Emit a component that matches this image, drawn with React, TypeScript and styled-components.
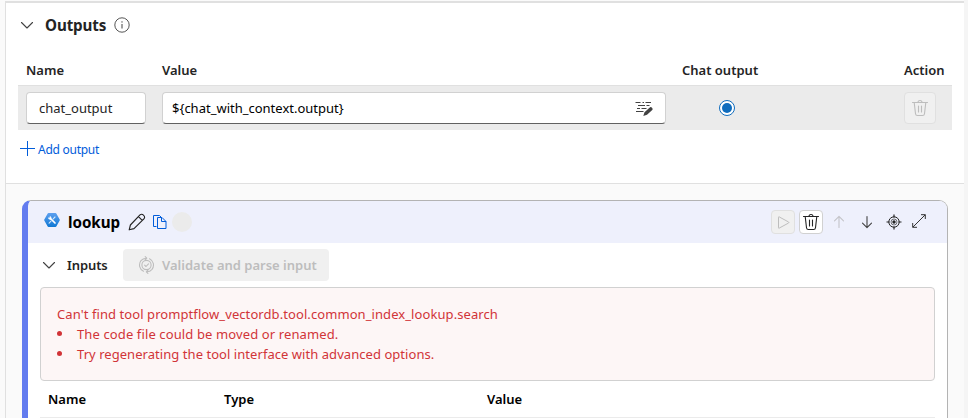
import React from "react";
import styled, { createGlobalStyle } from "styled-components";

const GlobalStyle = createGlobalStyle`
  * { box-sizing: border-box; }
  body {
    margin: 0;
    background: #fafafa;
    color: #242424;
    font-family: "Noto Sans", "Open Sans", sans-serif;
    font-size: 13px;
    line-height: 20px;
    overflow: hidden;
  }
  svg { display: block; flex: none; }
`;

const Page = styled.div`
  width: 968px;
  height: 418px;
  padding: 1px 4px 0 5px;
  overflow: hidden;
  background: linear-gradient(to right, #fafafa 964px, #f5f5f5 964px);
`;

const Panel = styled.main`
  height: 417px;
  border-left: 1px solid #e0e0e0;
  border-top: 2px solid #e0e0e0;
`;

const Label = styled.span<{ $weight?: number; $spacing?: number; $color?: string }>`
  font-weight: ${(p) => p.$weight ?? 400};
  letter-spacing: ${(p) => p.$spacing ?? 0}px;
  color: ${(p) => p.$color ?? "inherit"};
  white-space: nowrap;
`;

const OutputsSection = styled.section`
  height: 181px;
  padding: 10px 12px 0;
  background: #fff;
  border-bottom: 1px solid #e0e0e0;
`;

const SectionTitle = styled.div`
  display: flex;
  align-items: center;
  height: 24px;
  padding-left: 2px;
`;

const TitleText = styled.h2`
  margin: 0 8px 0 11px;
  font-size: 15.2px;
  font-weight: 700;
  line-height: 22px;
  letter-spacing: -0.12px;
`;

const OutputGrid = styled.div`
  display: grid;
  grid-template-columns: 120px 504px 1fr 48px;
  column-gap: 16px;
  align-items: center;
  width: 934px;
  padding: 0 0 0 8px;
`;

const OutputHead = styled(OutputGrid)`
  height: 30px;
  margin-top: 18px;
`;

const OutputRow = styled(OutputGrid)`
  height: 45px;
  background: #ebebeb;
  border-top: 1px solid #e0e0e0;
`;

const Field = styled.div`
  display: flex;
  align-items: center;
  justify-content: space-between;
  height: 32px;
  padding: 0 12px 0 9px;
  background: #fff;
  border: 1px solid #d1d1d1;
  border-bottom-color: #616161;
  border-radius: 4px;
`;

const NameField = styled(Field)`
  padding-left: 12px;
`;

const RadioCell = styled.div`
  padding-left: 37px;
`;

const IconButton = styled.div<{ $size: number; $disabled?: boolean }>`
  display: flex;
  align-items: center;
  justify-content: center;
  flex: none;
  width: ${(p) => p.$size}px;
  height: ${(p) => p.$size}px;
  color: ${(p) => (p.$disabled ? "#bdbdbd" : "#242424")};
  background: ${(p) => (p.$disabled ? "#f0f0f0" : "#fff")};
  border: 1px solid ${(p) => (p.$disabled ? "#e0e0e0" : "#d1d1d1")};
  border-radius: 4px;
`;

const AddLink = styled.div`
  display: flex;
  align-items: center;
  gap: 3px;
  height: 20px;
  margin: 9px 0 0 2px;
  color: #015cda;
`;

const AddText = styled.span`
  padding-top: 1px;
  font-size: 12px;
  letter-spacing: -0.26px;
`;

const NodeCard = styled.section`
  width: 926px;
  height: 240px;
  margin: 16px 0 0 16px;
  background: #fff;
  border: 1px solid #b3b3b3;
  border-left: 6px solid #637cef;
  border-radius: 9px;
  overflow: hidden;
`;

const NodeHeader = styled.header`
  display: flex;
  align-items: center;
  height: 42px;
  padding: 0 21px 0 16px;
  background: #eef0fc;
`;

const LogoSlot = styled.div`
  padding-bottom: 4px;
`;

const NodeName = styled.h3`
  margin: 0 8px 0 8px;
  font-size: 15.2px;
  line-height: 22px;
  letter-spacing: -0.06px;
  color: #000;
`;

const EditIcons = styled.div`
  display: flex;
  align-items: center;
  gap: 7px;
`;

const StatusDot = styled.i`
  width: 20px;
  height: 20px;
  margin-left: -2px;
  border-radius: 50%;
  background: #ebebeb;
`;

const Toolbar = styled.div`
  display: flex;
  align-items: center;
  gap: 4px;
  margin-left: auto;
`;

const ToolIcons = styled.div`
  display: flex;
  align-items: center;
  gap: 11px;
  margin-left: 4px;
`;

const ArrowPair = styled.div`
  display: flex;
  gap: 12px;
`;

const ExpandSlot = styled.div`
  margin: 0 0 2px -1px;
`;

const InputsBar = styled.div`
  display: flex;
  align-items: center;
  height: 44px;
  padding-left: 14px;
`;

const InputsLabel = styled.div`
  width: 67px;
  padding-left: 11px;
`;

const ValidateButton = styled.div`
  display: flex;
  align-items: center;
  gap: 7px;
  width: 206px;
  height: 32px;
  padding-left: 15px;
  color: #bdbdbd;
  background: #f0f0f0;
  border-radius: 4px;
`;

const ErrorBox = styled.div`
  width: 895px;
  height: 94px;
  margin-left: 12px;
  padding: 16px;
  color: #d13438;
  background: #fdf6f6;
  border: 1px solid #d1d1d1;
  border-radius: 4px;
`;

const ErrorList = styled.ul`
  margin: 0;
  padding: 0;
  list-style: none;
`;

const ErrorItem = styled.li`
  display: flex;
  align-items: center;
  gap: 15px;
  &::before {
    content: "";
    width: 5px;
    height: 5px;
    margin-top: -2px;
    border-radius: 50%;
    background: #d13438;
  }
`;

const InputsHead = styled.div`
  display: grid;
  grid-template-columns: 176px 263px 1fr;
  align-items: center;
  width: 895px;
  height: 37px;
  margin-left: 12px;
  padding-left: 8px;
  color: #000;
  border-bottom: 1px solid #ebebeb;
`;

const Chevron = () => (
  <svg width="14" height="14" viewBox="0 0 14 14" fill="none" stroke="#424242" strokeWidth="1.1" strokeLinecap="round" strokeLinejoin="round">
    <path d="M1.5 4.5 7 10l5.500-5.500" />
  </svg>
);

const InfoIcon = () => (
  <svg width="16" height="16" viewBox="0 0 16 16" fill="none" stroke="#424242">
    <circle cx="8" cy="8" r="7.200" strokeWidth=".9" />
    <path d="M8 7v4.500" strokeWidth="1" />
    <circle cx="8" cy="4.900" r=".7" fill="#424242" stroke="none" />
  </svg>
);

const TrashIcon = () => (
  <svg width="18" height="18" viewBox="0 0 18 18" fill="none" stroke="currentColor" strokeWidth="1.100" strokeLinecap="round" strokeLinejoin="round">
    <path d="M1.500 3.500h15M7 3.500a2 2 0 0 1 4 0M3.200 3.500l1.300 11.200a2 2 0 0 0 2 1.800h5a2 2 0 0 0 2-1.800l1.300-11.200M7.500 7v6M10.500 7v6" />
  </svg>
);

const TextEditIcon = () => (
  <svg width="18" height="16" viewBox="0 0 18 16" fill="none">
    <path d="M.5 2.500h5M7.500 2.500h1.500M10.500 2.500h5.500M3 5.500h7M11.500 5.500h3M2 8.500h3M6.500 8.500h5M1 11.500h7.500" stroke="#424242" strokeWidth="1" />
    <path d="M8.300 16l1.200-3.700 5-4.600a1.700 1.700 0 0 1 2.500 2.500l-5 4.600z" fill="#424242" />
  </svg>
);

const RadioIcon = () => (
  <svg width="16" height="16" viewBox="0 0 16 16">
    <circle cx="8" cy="8" r="7.500" fill="#fff" stroke="#0f6cbd" />
    <circle cx="8" cy="8" r="5" fill="#0f6cbd" />
  </svg>
);

const PlusIcon = () => (
  <svg width="15" height="16" viewBox="0 0 15 16" stroke="#015cda" strokeWidth="1">
    <path d="M0 7.500h15M7.500 0v15" />
  </svg>
);

const ToolLogo = () => (
  <svg width="16" height="16" viewBox="0 0 16 16">
    <defs>
      <linearGradient id="hex" x1="0" y1="0" x2="0" y2="1">
        <stop offset="0" stopColor="#5ea0ef" />
        <stop offset="1" stopColor="#0f78d4" />
      </linearGradient>
    </defs>
    <path d="M4.500 1h7a1 1 0 0 1 .8.500L15.700 7.400a1 1 0 0 1 0 1l-3.400 6a1 1 0 0 1-.8.500h-7a1 1 0 0 1-.8-.500L.3 8.500a1 1 0 0 1 0-1l3.400-6a1 1 0 0 1 .8-.500z" fill="url(#hex)" />
    <path d="M6 6l5 5" stroke="#fff" strokeWidth="1.700" strokeLinecap="round" />
    <path d="M11 5L9.200 6.800M7 9.200l-1.900 1.900" stroke="#d3e6fa" strokeWidth="1.100" strokeLinecap="round" />
    <path d="M4.200 5.200a2 2 0 0 0 2.900 2.200L7.400 5.600a1.900 1.900 0 0 0-2-1.600l1 1.300-.8.900z" fill="#fff" />
  </svg>
);

const PencilIcon = () => (
  <svg width="18" height="18" viewBox="0 0 18 18" fill="none" stroke="#242424" strokeWidth="1.150" strokeLinejoin="round">
    <path d="M12 1.900a2.200 2.200 0 0 1 3.200 0l.7.700a2.200 2.200 0 0 1 0 3.200L6 15.600l-4.800 1.200L2.400 12zM10.500 3.600l3.700 3.700" />
  </svg>
);

const CopyIcon = () => (
  <svg width="14" height="16" viewBox="0 0 14 16" fill="none" stroke="#015cda" strokeWidth="1">
    <path d="M3.500 12.500h-3V1.500h6l2 2M4.500 3.500h4.500l4 4v7H4.500zM8.500 3.500V7.500H13" />
  </svg>
);

const PlayIcon = () => (
  <svg width="16" height="16" viewBox="0 0 16 16" fill="none" stroke="currentColor" strokeWidth="1" strokeLinejoin="round">
    <path d="M3.500 3.200v10.600q0 .7.700.300L13.600 9q.6-.5 0-1L4.200 2.900q-.7-.3-.7.300z" />
  </svg>
);

const ArrowIcon = ({ down }: { down?: boolean }) => (
  <svg width="16" height="16" viewBox="0 0 16 16" fill="none" stroke={down ? "#424242" : "#c4c4c8"} strokeWidth="1.100" strokeLinecap="round" strokeLinejoin="round">
    <path d={down ? "M8 2.500v11M3.500 9.200L8 13.600l4.500-4.400" : "M8 13.500v-11M3.500 6.800L8 2.400l4.500 4.400"} />
  </svg>
);

const TargetIcon = () => (
  <svg width="16" height="16" viewBox="0 0 16 16" fill="none" stroke="#242424">
    <circle cx="8" cy="8" r="5.200" strokeWidth="1" />
    <circle cx="8" cy="8" r="3" strokeWidth=".6" />
    <circle cx="8" cy="8" r="1.700" fill="#242424" stroke="none" />
    <path d="M8 .5v3M8 12.500v3M.5 8h3M12.500 8h3" strokeWidth="1.200" />
  </svg>
);

const ExpandIcon = () => (
  <svg width="14" height="14" viewBox="0 0 14 14" fill="none" stroke="#333" strokeWidth="1">
    <path d="M.8 13.200L13.200.8M9 .7h4.300V5M.7 9v4.300H5" />
  </svg>
);

const ValidateIcon = () => (
  <svg width="17" height="18" viewBox="0 0 17 18" fill="none" stroke="currentColor" strokeWidth="1.100" strokeLinecap="round" strokeLinejoin="round">
    <circle cx="8.500" cy="9" r="4.600" />
    <path d="M6.600 9.100l1.400 1.400 2.500-2.700M5.500 15.300A7 7 0 0 1 3 4.700a7 7 0 0 1 5-2.500M11.500 2.700A7 7 0 0 1 14 13.300a7 7 0 0 1-5 2.500M7.200.6l1.600 1.600-1.600 1.700M9.900 14.100l-1.600 1.700 1.600 1.600" />
  </svg>
);

export default function App() {
  return (
    <Page>
      <GlobalStyle />
      <Panel>
        <OutputsSection>
          <SectionTitle>
            <Chevron />
            <TitleText>Outputs</TitleText>
            <InfoIcon />
          </SectionTitle>
          <OutputHead>
            <Label $weight={600}>Name</Label>
            <Label $weight={600}>Value</Label>
            <Label $weight={600}>Chat output</Label>
            <Label $weight={600}>Action</Label>
          </OutputHead>
          <OutputRow>
            <NameField>
              <Label>chat_output</Label>
            </NameField>
            <Field>
              <Label $color="#000">{"${chat_with_context.output}"}</Label>
              <TextEditIcon />
            </Field>
            <RadioCell>
              <RadioIcon />
            </RadioCell>
            <IconButton $size={32} $disabled>
              <TrashIcon />
            </IconButton>
          </OutputRow>
          <AddLink>
            <PlusIcon />
            <AddText>Add output</AddText>
          </AddLink>
        </OutputsSection>

        <NodeCard>
          <NodeHeader>
            <LogoSlot>
              <ToolLogo />
            </LogoSlot>
            <NodeName>lookup</NodeName>
            <EditIcons>
              <PencilIcon />
              <CopyIcon />
              <StatusDot />
            </EditIcons>
            <Toolbar>
              <IconButton $size={24} $disabled>
                <PlayIcon />
              </IconButton>
              <IconButton $size={24}>
                <TrashIcon />
              </IconButton>
              <ToolIcons>
                <ArrowPair>
                  <ArrowIcon />
                  <ArrowIcon down />
                </ArrowPair>
                <TargetIcon />
                <ExpandSlot>
                  <ExpandIcon />
                </ExpandSlot>
              </ToolIcons>
            </Toolbar>
          </NodeHeader>
          <InputsBar>
            <Chevron />
            <InputsLabel>
              <Label $weight={600} $spacing={-0.1}>Inputs</Label>
            </InputsLabel>
            <ValidateButton>
              <ValidateIcon />
              <Label $weight={600}>Validate and parse input</Label>
            </ValidateButton>
          </InputsBar>
          <ErrorBox>
            <Label $spacing={0.08}>Can't find tool promptflow_vectordb.tool.common_index_lookup.search</Label>
            <ErrorList>
              <ErrorItem>
                <Label $spacing={0.12}>The code file could be moved or renamed.</Label>
              </ErrorItem>
              <ErrorItem>
                <Label $spacing={0.05}>Try regenerating the tool interface with advanced options.</Label>
              </ErrorItem>
            </ErrorList>
          </ErrorBox>
          <InputsHead>
            <Label $weight={600}>Name</Label>
            <Label $weight={600}>Type</Label>
            <Label $weight={600}>Value</Label>
          </InputsHead>
        </NodeCard>
      </Panel>
    </Page>
  );
}
